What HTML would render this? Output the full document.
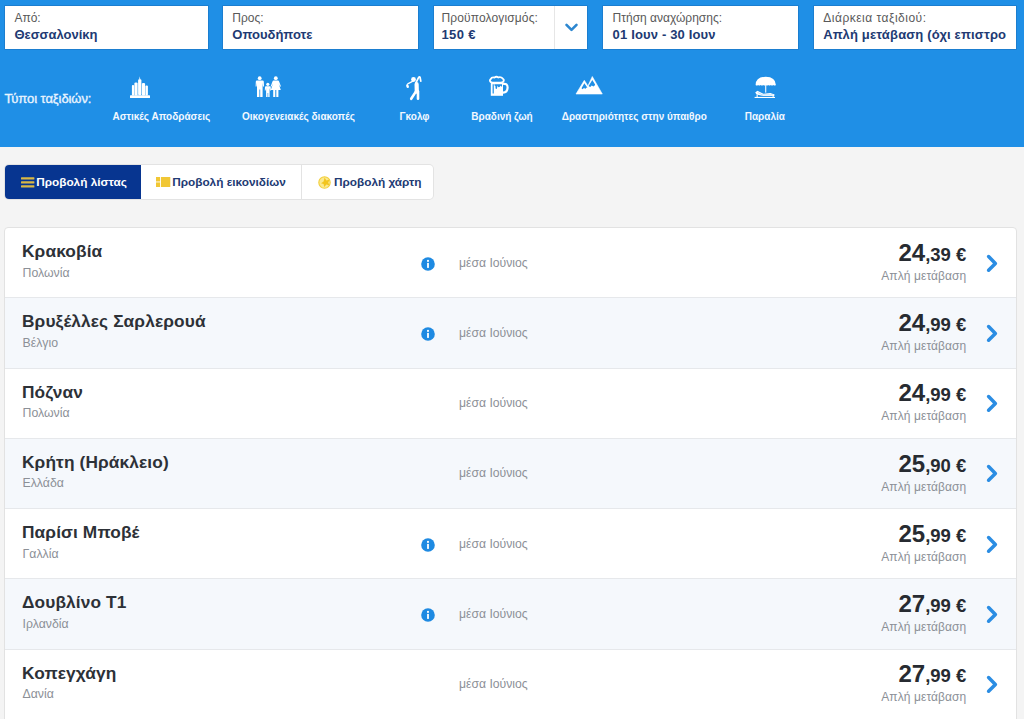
<!DOCTYPE html>
<html><head><meta charset="utf-8"><title>Ryanair</title>
<style>
html,body{margin:0;padding:0;}
body{width:1024px;height:719px;overflow:hidden;position:relative;background:#f4f4f4;font-family:"Liberation Sans",sans-serif;}
.t{position:absolute;white-space:nowrap;}
.abs{position:absolute;}
svg{position:absolute;overflow:visible}
</style></head><body>
<div class="abs" style="left:0;top:0;width:1024px;height:147px;background:#1f8fe6"></div>
<div class="abs" style="left:5px;top:6px;width:203px;height:43px;background:#fff;box-shadow:0 0 0 0.6px rgba(20,90,160,0.5)"></div>
<div class="abs" style="left:223px;top:6px;width:195px;height:43px;background:#fff;box-shadow:0 0 0 0.6px rgba(20,90,160,0.5)"></div>
<div class="abs" style="left:434px;top:6px;width:153px;height:43px;background:#fff;box-shadow:0 0 0 0.6px rgba(20,90,160,0.5)"></div>
<div class="abs" style="left:603px;top:6px;width:195px;height:43px;background:#fff;box-shadow:0 0 0 0.6px rgba(20,90,160,0.5)"></div>
<div class="abs" style="left:814px;top:6px;width:202px;height:43px;background:#fff;box-shadow:0 0 0 0.6px rgba(20,90,160,0.5)"></div>
<div class="abs" style="left:554px;top:6px;width:1px;height:43px;background:#e6e6e6"></div>
<svg style="left:565px;top:23px" width="13" height="10" viewBox="0 0 13 10"><path d="M1.5,1.8 L6.5,6.8 L11.5,1.8" fill="none" stroke="#2d87d0" stroke-width="2.6" stroke-linecap="round" stroke-linejoin="round"/></svg>
<div class="t" style="left:14.40px;top:11.64px;font-size:12px;line-height:12px;font-weight:400;color:#595959;letter-spacing:0px;">Από:</div>
<div class="t" style="left:14.40px;top:28.40px;font-size:13px;line-height:13px;font-weight:700;color:#213a73;letter-spacing:0px;">Θεσσαλονίκη</div>
<div class="t" style="left:232.30px;top:11.64px;font-size:12px;line-height:12px;font-weight:400;color:#595959;letter-spacing:0px;">Προς:</div>
<div class="t" style="left:232.30px;top:28.40px;font-size:13px;line-height:13px;font-weight:700;color:#213a73;letter-spacing:0px;">Οπουδήποτε</div>
<div class="t" style="left:441.50px;top:11.64px;font-size:12px;line-height:12px;font-weight:400;color:#595959;letter-spacing:0.13px;">Προϋπολογισμός:</div>
<div class="t" style="left:441.50px;top:28.40px;font-size:13px;line-height:13px;font-weight:700;color:#213a73;letter-spacing:0.35px;">150 €</div>
<div class="t" style="left:612.60px;top:11.64px;font-size:12px;line-height:12px;font-weight:400;color:#595959;letter-spacing:0px;">Πτήση αναχώρησης:</div>
<div class="t" style="left:612.60px;top:28.40px;font-size:13px;line-height:13px;font-weight:700;color:#213a73;letter-spacing:0.16px;">01 Ιουν - 30 Ιουν</div>
<div class="t" style="left:823.30px;top:11.64px;font-size:12px;line-height:12px;font-weight:400;color:#595959;letter-spacing:0.5px;">Διάρκεια ταξιδιού:</div>
<div class="t" style="left:823.30px;top:28.40px;font-size:13px;line-height:13px;font-weight:700;color:#213a73;letter-spacing:0.17px;">Απλή μετάβαση (όχι επιστρο</div>
<div class="t" style="left:4.60px;top:91.90px;font-size:13px;line-height:13px;font-weight:400;color:#eaf4ff;-webkit-text-stroke:0.35px #eaf4ff;letter-spacing:-0.08px;">Τύποι ταξιδιών:</div>
<div class="t" style="left:61.30px;width:200px;text-align:center;top:111.53px;font-size:10px;line-height:10px;font-weight:700;color:#f2f8ff;">Αστικές Αποδράσεις</div>
<div class="t" style="left:198.50px;width:200px;text-align:center;top:111.53px;font-size:10px;line-height:10px;font-weight:700;color:#f2f8ff;">Οικογενειακές διακοπές</div>
<div class="t" style="left:314.50px;width:200px;text-align:center;top:111.53px;font-size:10px;line-height:10px;font-weight:700;color:#f2f8ff;">Γκολφ</div>
<div class="t" style="left:402.00px;width:200px;text-align:center;top:111.53px;font-size:10px;line-height:10px;font-weight:700;color:#f2f8ff;">Βραδινή ζωή</div>
<div class="t" style="left:534.30px;width:200px;text-align:center;top:111.53px;font-size:10px;line-height:10px;font-weight:700;color:#f2f8ff;">Δραστηριότητες στην ύπαιθρο</div>
<div class="t" style="left:664.80px;width:200px;text-align:center;top:111.53px;font-size:10px;line-height:10px;font-weight:700;color:#f2f8ff;">Παραλία</div>
<svg style="left:130px;top:76px" width="20" height="22" viewBox="0 0 20 22"><g fill="#ffffff">
<rect x="0" y="19.2" width="20" height="2.8" rx="0.6"/>
<rect x="1.9" y="9" width="2.2" height="10.5" rx="1"/>
<rect x="4.4" y="6.4" width="3.2" height="13" rx="1.2"/>
<rect x="8.1" y="3.2" width="3.3" height="16" rx="1.2"/><path d="M9.2,3.6 L9.75,0.2 L10.3,3.6Z"/>
<rect x="11.9" y="6.9" width="3.2" height="12.5" rx="1.2"/>
<rect x="15.4" y="9.6" width="2.5" height="10" rx="1"/>
</g></svg>
<svg style="left:255px;top:76px" width="27" height="22" viewBox="0 0 27 22"><g fill="#ffffff">
<circle cx="4.7" cy="2.2" r="1.9"/>
<path d="M1.8,4.6 H7.6 Q8.6,4.6 8.8,5.6 L9,10.6 H8 L7.6,6.8 V21 H5.2 V13.5 H4.4 V21 H2 V6.8 L1.6,10.6 H0.6 L0.8,5.6 Q1,4.6 1.8,4.6Z"/>
<circle cx="12.8" cy="8.3" r="1.6"/>
<path d="M10.8,10.3 H14.8 Q15.6,10.3 15.7,11 L15.9,14.6 H15.1 L14.6,12 V21 H13.2 V17 H12.6 V21 H11.1 V12 L10.6,14.6 H9.8 L10,11 Q10.1,10.3 10.8,10.3Z"/>
<circle cx="20.8" cy="2.2" r="1.9"/>
<path d="M18.6,4.6 H23 Q23.8,4.6 24.1,5.4 L26,10.6 H25 L23.6,7.4 L25.8,14 H23.4 V21 H21.3 V14 H20.3 V21 H18.2 V14 H15.8 L18,7.4 L16.6,10.6 H15.6 L17.5,5.4 Q17.8,4.6 18.6,4.6Z"/>
</g></svg>
<svg style="left:405px;top:76px" width="18" height="24" viewBox="0 0 18 24"><g fill="none" stroke="#ffffff" stroke-linecap="round" stroke-linejoin="round">
<path d="M10.9,6.8 L13.8,1.2 Q14.6,0.6 15.1,1.4 L15.8,5.2" stroke-width="1.7"/>
<path d="M7.5,5.4 L3.2,7.6 Q1.7,8.4 2,9.6" stroke-width="1.2"/>
<path d="M11.6,8.2 L11.8,15.6" stroke-width="4.2"/>
<path d="M11,15.4 L6.2,22.8" stroke-width="2.6"/>
<path d="M13,15.4 L13,22.8" stroke-width="2.6"/>
</g><circle cx="8.5" cy="3.5" r="2.4" fill="#ffffff"/><ellipse cx="2.6" cy="10.4" rx="1.3" ry="1.7" transform="rotate(-20 2.6 10.4)" fill="#ffffff"/></svg>
<svg style="left:488px;top:75px" width="22" height="22" viewBox="0 0 22 22">
<path d="M2.6,7 Q1.2,5.4 2.8,4 Q3.6,2 6.4,2.6 Q8.2,1 10.4,2.4 Q13,1.6 14.6,3.4 Q16.6,4.6 15.4,6.6 Q14.6,7.6 12.6,7.6 H4.6 Q3.4,7.6 2.6,7Z" fill="none" stroke="#ffffff" stroke-width="1.8"/>
<path d="M2.8,8 H15 V20.8 H2.8Z" fill="#ffffff"/>
<path d="M4.6,9.2 H5.8 V18.6 H4.6Z M6.4,9.2 H14 V11 Q13.4,12.4 13,11.2 L12.8,10.6 Q10.6,14 9.6,10.4 Q8.8,15.4 7.6,13.6 L7.4,11 Q6.8,10.6 6.4,10.2Z" fill="#1f8fe6"/>
<path d="M15,9 Q19.6,8 19.6,12.6 Q19.4,17.4 15,17.6" fill="none" stroke="#ffffff" stroke-width="2.2"/>
</svg>
<svg style="left:574px;top:73px" width="30" height="25" viewBox="0 0 30 25">
<path d="M2,21 L10.3,7.3 L13.9,12.9 L18.3,3.5 L28.3,21Z" fill="#ffffff" stroke="#ffffff" stroke-width="0.6" stroke-linejoin="round"/>
<path d="M10.35,10.3 L7.5,15.2 L8.7,16.3 L10.1,14.7 L11.1,16 L12.5,14.6 L13.3,15 L13.1,14.2Z" fill="#1f8fe6"/>
<path d="M18.3,6.9 L14.9,12.4 L14.7,13.2 L16.3,13.9 L17.7,12.6 L19.5,13.6 L20.9,12.2 L21.1,11.6Z" fill="#1f8fe6"/>
</svg>
<svg style="left:750px;top:73px" width="30" height="27" viewBox="0 0 30 27"><g fill="#ffffff">
<path d="M5.6,12 Q5.8,3.9 15.7,3.75 Q25.6,3.9 25.9,12 Q24.6,13 23.3,12 Q22.1,13 20.8,12 Q19.6,13 18.2,12 Q17,13 15.7,12 Q14.4,13 13.2,12 Q12,13 10.6,12 Q9.4,13 8.1,12 Q6.8,13 5.6,12Z"/>
<rect x="15.2" y="12" width="1.05" height="7.6"/>
<path d="M5.2,19.4 L7.4,17.8 L13.4,20.8 L20.4,20 L24.6,21.4 L24.2,23 L13.2,23 L6.6,21.6 Z"/>
<path d="M7.6,19.4 L12.6,21.9 L22.8,21.9" fill="none" stroke="#1f8fe6" stroke-width="0.5" opacity="0.6"/>
<rect x="4.6" y="23.9" width="20.4" height="1.1"/>
<rect x="6.6" y="21.6" width="1.1" height="2.6"/><rect x="22.6" y="22.6" width="1.1" height="2"/>
</g></svg>
<div class="abs" style="left:4.5px;top:165px;width:428.5px;height:34px;background:#fff;border-radius:4px;box-shadow:0 0 0 1px #e3e3e3"></div>
<div class="abs" style="left:4.5px;top:165px;width:136px;height:34px;background:#073590;border-radius:4px 0 0 4px"></div>
<div class="abs" style="left:301px;top:165px;width:1px;height:34px;background:#e3e3e3"></div>
<svg style="left:21px;top:177px" width="14" height="11" viewBox="0 0 14 11"><g fill="#d9b844"><rect x="0" y="0.2" width="13.4" height="2.3" rx="0.5"/><rect x="0" y="4.2" width="13.4" height="2.3" rx="0.5"/><rect x="0" y="8.2" width="13.4" height="2.3" rx="0.5"/></g></svg>
<div class="t" style="left:36.20px;top:176.51px;font-size:11.8px;line-height:11.8px;font-weight:700;color:#ffffff;">Προβολή λίστας</div>
<svg style="left:156px;top:177px" width="15" height="10" viewBox="0 0 15 10"><g fill="#f1c735"><rect x="0" y="0" width="4.1" height="4.5"/><rect x="0" y="5.4" width="4.1" height="4.6"/><rect x="5" y="0" width="9.3" height="10"/></g></svg>
<div class="t" style="left:172.20px;top:176.51px;font-size:11.8px;line-height:11.8px;font-weight:700;color:#213a73;">Προβολή εικονιδίων</div>
<svg style="left:318px;top:175.5px" width="14" height="14" viewBox="0 0 14 14"><circle cx="6.5" cy="6.5" r="5.7" fill="#fbe98f" stroke="#f3cf3c" stroke-width="1.1"/><path d="M6.6,1.4 L8.4,4.6 L11.6,3.4 L10.2,6.8 L11.8,9.4 L8.4,8.6 L6.2,11 L5.6,8 L3,7.2 L5.6,5.4Z" fill="#f2c51f"/></svg>
<div class="t" style="left:334.00px;top:176.51px;font-size:11.8px;line-height:11.8px;font-weight:700;color:#213a73;">Προβολή χάρτη</div>
<div class="abs" style="left:4px;top:227px;width:1013px;height:520px;background:#fff;border:1px solid #e2e2e2;border-radius:4px;box-sizing:border-box"></div>
<div class="t" style="left:22.00px;top:243.06px;font-size:17.3px;line-height:17.3px;font-weight:700;color:#2d3137;letter-spacing:0.12px;">Κρακοβία</div>
<div class="t" style="left:22.50px;top:266.59px;font-size:12.3px;line-height:12.3px;font-weight:400;color:#8c9097;">Πολωνία</div>
<svg style="left:420.5px;top:256.50px" width="14" height="14" viewBox="0 0 14 14"><circle cx="7" cy="7" r="6.8" fill="#1e8ae2"/><rect x="6.1" y="5.9" width="1.8" height="5" fill="#fff"/><circle cx="7" cy="3.9" r="1.05" fill="#fff"/></svg>
<div class="t" style="left:459.00px;top:256.67px;font-size:12.2px;line-height:12.2px;font-weight:400;color:#8c9097;">μέσα Ιούνιος</div>
<div class="t" style="right:57.70px;top:240.98px;font-size:24px;line-height:24px;font-weight:700;color:#272b31">24<span style="font-size:18.5px">,39 €</span></div>
<div class="t" style="right:57.70px;top:269.84px;font-size:12px;line-height:12px;font-weight:400;color:#8c9097;letter-spacing:0.08px;">Απλή μετάβαση</div>
<svg style="left:985px;top:253.50px" width="14" height="20" viewBox="0 0 14 20"><path d="M3.6,2.6 L10.4,9.4 L3.6,16.2" fill="none" stroke="#2b8de3" stroke-width="3.5" stroke-linecap="round" stroke-linejoin="round"/></svg>
<div class="abs" style="left:5px;top:297.25px;width:1011px;height:1px;background:#e6e8eb"></div>
<div class="abs" style="left:5px;top:298.25px;width:1011px;height:69.25px;background:#f5f8fc"></div>
<div class="t" style="left:22.00px;top:313.31px;font-size:17.3px;line-height:17.3px;font-weight:700;color:#2d3137;letter-spacing:0.12px;">Βρυξέλλες Σαρλερουά</div>
<div class="t" style="left:22.50px;top:336.84px;font-size:12.3px;line-height:12.3px;font-weight:400;color:#8c9097;">Βέλγιο</div>
<svg style="left:420.5px;top:326.75px" width="14" height="14" viewBox="0 0 14 14"><circle cx="7" cy="7" r="6.8" fill="#1e8ae2"/><rect x="6.1" y="5.9" width="1.8" height="5" fill="#fff"/><circle cx="7" cy="3.9" r="1.05" fill="#fff"/></svg>
<div class="t" style="left:459.00px;top:326.92px;font-size:12.2px;line-height:12.2px;font-weight:400;color:#8c9097;">μέσα Ιούνιος</div>
<div class="t" style="right:57.70px;top:311.23px;font-size:24px;line-height:24px;font-weight:700;color:#272b31">24<span style="font-size:18.5px">,99 €</span></div>
<div class="t" style="right:57.70px;top:340.09px;font-size:12px;line-height:12px;font-weight:400;color:#8c9097;letter-spacing:0.08px;">Απλή μετάβαση</div>
<svg style="left:985px;top:323.75px" width="14" height="20" viewBox="0 0 14 20"><path d="M3.6,2.6 L10.4,9.4 L3.6,16.2" fill="none" stroke="#2b8de3" stroke-width="3.5" stroke-linecap="round" stroke-linejoin="round"/></svg>
<div class="abs" style="left:5px;top:367.50px;width:1011px;height:1px;background:#e6e8eb"></div>
<div class="abs" style="left:5px;top:368.50px;width:1011px;height:69.25px;background:#ffffff"></div>
<div class="t" style="left:22.00px;top:383.56px;font-size:17.3px;line-height:17.3px;font-weight:700;color:#2d3137;letter-spacing:0.12px;">Πόζναν</div>
<div class="t" style="left:22.50px;top:407.09px;font-size:12.3px;line-height:12.3px;font-weight:400;color:#8c9097;">Πολωνία</div>
<div class="t" style="left:459.00px;top:397.17px;font-size:12.2px;line-height:12.2px;font-weight:400;color:#8c9097;">μέσα Ιούνιος</div>
<div class="t" style="right:57.70px;top:381.48px;font-size:24px;line-height:24px;font-weight:700;color:#272b31">24<span style="font-size:18.5px">,99 €</span></div>
<div class="t" style="right:57.70px;top:410.34px;font-size:12px;line-height:12px;font-weight:400;color:#8c9097;letter-spacing:0.08px;">Απλή μετάβαση</div>
<svg style="left:985px;top:394.00px" width="14" height="20" viewBox="0 0 14 20"><path d="M3.6,2.6 L10.4,9.4 L3.6,16.2" fill="none" stroke="#2b8de3" stroke-width="3.5" stroke-linecap="round" stroke-linejoin="round"/></svg>
<div class="abs" style="left:5px;top:437.75px;width:1011px;height:1px;background:#e6e8eb"></div>
<div class="abs" style="left:5px;top:438.75px;width:1011px;height:69.25px;background:#f5f8fc"></div>
<div class="t" style="left:22.00px;top:453.81px;font-size:17.3px;line-height:17.3px;font-weight:700;color:#2d3137;letter-spacing:0.12px;">Κρήτη (Ηράκλειο)</div>
<div class="t" style="left:22.50px;top:477.34px;font-size:12.3px;line-height:12.3px;font-weight:400;color:#8c9097;">Ελλάδα</div>
<div class="t" style="left:459.00px;top:467.42px;font-size:12.2px;line-height:12.2px;font-weight:400;color:#8c9097;">μέσα Ιούνιος</div>
<div class="t" style="right:57.70px;top:451.73px;font-size:24px;line-height:24px;font-weight:700;color:#272b31">25<span style="font-size:18.5px">,90 €</span></div>
<div class="t" style="right:57.70px;top:480.59px;font-size:12px;line-height:12px;font-weight:400;color:#8c9097;letter-spacing:0.08px;">Απλή μετάβαση</div>
<svg style="left:985px;top:464.25px" width="14" height="20" viewBox="0 0 14 20"><path d="M3.6,2.6 L10.4,9.4 L3.6,16.2" fill="none" stroke="#2b8de3" stroke-width="3.5" stroke-linecap="round" stroke-linejoin="round"/></svg>
<div class="abs" style="left:5px;top:508.00px;width:1011px;height:1px;background:#e6e8eb"></div>
<div class="abs" style="left:5px;top:509.00px;width:1011px;height:69.25px;background:#ffffff"></div>
<div class="t" style="left:22.00px;top:524.06px;font-size:17.3px;line-height:17.3px;font-weight:700;color:#2d3137;letter-spacing:0.12px;">Παρίσι Μποβέ</div>
<div class="t" style="left:22.50px;top:547.59px;font-size:12.3px;line-height:12.3px;font-weight:400;color:#8c9097;">Γαλλία</div>
<svg style="left:420.5px;top:537.50px" width="14" height="14" viewBox="0 0 14 14"><circle cx="7" cy="7" r="6.8" fill="#1e8ae2"/><rect x="6.1" y="5.9" width="1.8" height="5" fill="#fff"/><circle cx="7" cy="3.9" r="1.05" fill="#fff"/></svg>
<div class="t" style="left:459.00px;top:537.67px;font-size:12.2px;line-height:12.2px;font-weight:400;color:#8c9097;">μέσα Ιούνιος</div>
<div class="t" style="right:57.70px;top:521.98px;font-size:24px;line-height:24px;font-weight:700;color:#272b31">25<span style="font-size:18.5px">,99 €</span></div>
<div class="t" style="right:57.70px;top:550.84px;font-size:12px;line-height:12px;font-weight:400;color:#8c9097;letter-spacing:0.08px;">Απλή μετάβαση</div>
<svg style="left:985px;top:534.50px" width="14" height="20" viewBox="0 0 14 20"><path d="M3.6,2.6 L10.4,9.4 L3.6,16.2" fill="none" stroke="#2b8de3" stroke-width="3.5" stroke-linecap="round" stroke-linejoin="round"/></svg>
<div class="abs" style="left:5px;top:578.25px;width:1011px;height:1px;background:#e6e8eb"></div>
<div class="abs" style="left:5px;top:579.25px;width:1011px;height:69.25px;background:#f5f8fc"></div>
<div class="t" style="left:22.00px;top:594.31px;font-size:17.3px;line-height:17.3px;font-weight:700;color:#2d3137;letter-spacing:0.12px;">Δουβλίνο Τ1</div>
<div class="t" style="left:22.50px;top:617.84px;font-size:12.3px;line-height:12.3px;font-weight:400;color:#8c9097;">Ιρλανδία</div>
<svg style="left:420.5px;top:607.75px" width="14" height="14" viewBox="0 0 14 14"><circle cx="7" cy="7" r="6.8" fill="#1e8ae2"/><rect x="6.1" y="5.9" width="1.8" height="5" fill="#fff"/><circle cx="7" cy="3.9" r="1.05" fill="#fff"/></svg>
<div class="t" style="left:459.00px;top:607.92px;font-size:12.2px;line-height:12.2px;font-weight:400;color:#8c9097;">μέσα Ιούνιος</div>
<div class="t" style="right:57.70px;top:592.23px;font-size:24px;line-height:24px;font-weight:700;color:#272b31">27<span style="font-size:18.5px">,99 €</span></div>
<div class="t" style="right:57.70px;top:621.09px;font-size:12px;line-height:12px;font-weight:400;color:#8c9097;letter-spacing:0.08px;">Απλή μετάβαση</div>
<svg style="left:985px;top:604.75px" width="14" height="20" viewBox="0 0 14 20"><path d="M3.6,2.6 L10.4,9.4 L3.6,16.2" fill="none" stroke="#2b8de3" stroke-width="3.5" stroke-linecap="round" stroke-linejoin="round"/></svg>
<div class="abs" style="left:5px;top:648.50px;width:1011px;height:1px;background:#e6e8eb"></div>
<div class="abs" style="left:5px;top:649.50px;width:1011px;height:69.25px;background:#ffffff"></div>
<div class="t" style="left:22.00px;top:664.56px;font-size:17.3px;line-height:17.3px;font-weight:700;color:#2d3137;letter-spacing:0.12px;">Κοπεγχάγη</div>
<div class="t" style="left:22.50px;top:688.09px;font-size:12.3px;line-height:12.3px;font-weight:400;color:#8c9097;">Δανία</div>
<div class="t" style="left:459.00px;top:678.17px;font-size:12.2px;line-height:12.2px;font-weight:400;color:#8c9097;">μέσα Ιούνιος</div>
<div class="t" style="right:57.70px;top:662.48px;font-size:24px;line-height:24px;font-weight:700;color:#272b31">27<span style="font-size:18.5px">,99 €</span></div>
<div class="t" style="right:57.70px;top:691.34px;font-size:12px;line-height:12px;font-weight:400;color:#8c9097;letter-spacing:0.08px;">Απλή μετάβαση</div>
<svg style="left:985px;top:675.00px" width="14" height="20" viewBox="0 0 14 20"><path d="M3.6,2.6 L10.4,9.4 L3.6,16.2" fill="none" stroke="#2b8de3" stroke-width="3.5" stroke-linecap="round" stroke-linejoin="round"/></svg>
</body></html>
